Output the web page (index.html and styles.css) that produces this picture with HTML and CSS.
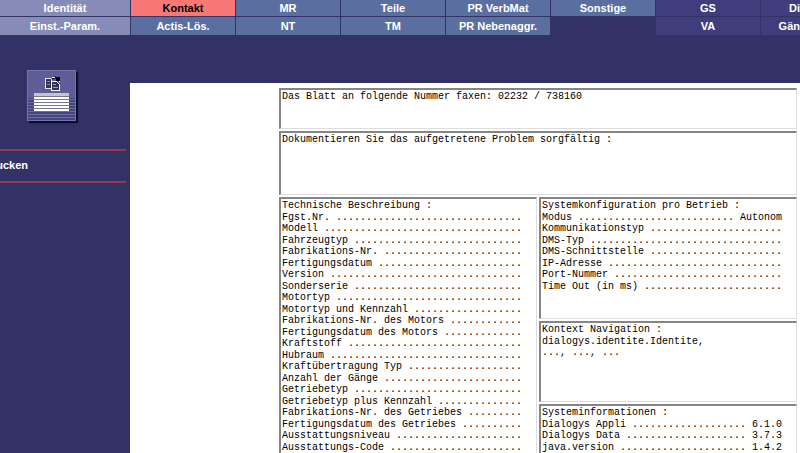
FILE: index.html
```html
<!DOCTYPE html>
<html lang="de">
<head>
<meta charset="utf-8">
<title>Dialogys – Kontakt</title>
<link rel="stylesheet" href="styles.css">
</head>
<body>
<nav class="tabs">
  <button class="tab light">Identität</button>
  <button class="tab active">Kontakt</button>
  <button class="tab">MR</button>
  <button class="tab">Teile</button>
  <button class="tab">PR VerbMat</button>
  <button class="tab">Sonstige</button>
  <button class="tab dark">GS</button>
  <button class="tab dark cut">Di</button>
  <button class="tab light">Einst.-Param.</button>
  <button class="tab">Actis-Lös.</button>
  <button class="tab">NT</button>
  <button class="tab">TM</button>
  <button class="tab">PR Nebenaggr.</button>
  <span></span>
  <button class="tab dark">VA</button>
  <button class="tab dark cut">Gän</button>
</nav>
<div class="layout">
  <aside class="side">
    <button class="tool" aria-label="Drucken">
      <svg width="49" height="51" viewBox="0 0 49 51" shape-rendering="crispEdges">
        <rect width="49" height="51" fill="#5d5d98"/>
        <rect y="28" width="49" height="23" fill="#44447f"/>
        <path d="M0 29.5H49M0 32.5H49M0 35.5H49M0 38.5H49M0 41.5H49M0 44.5H49M0 47.5H49" stroke="#6c6ca6"/>
        <path d="M.5 51V.5H49" fill="none" stroke="#7474ac"/>
        <path d="M48.5 1V50.5H0" fill="none" stroke="#7373aa"/>
        <rect x="7" y="23" width="35" height="17" fill="#77778f"/>
        <rect x="7" y="23" width="35" height="3" fill="#c4c4cc"/>
        <path d="M7 28H42M7 31H42M7 34H42M7 37H42M7 39.5H42" stroke="#fff" stroke-width="2"/>
        <path d="M18.5 8.5H24.5V18.5H18.5Z" fill="#33334d" stroke="#e4e4ec"/>
        <path d="M20 11.5H23M20 14.5H23" stroke="#8888a0"/>
        <path d="M24.5 11.5H29.5L32.5 14.5V20.5H24.5Z" fill="#33334d" stroke="#f4f4fa"/>
        <path d="M26 14.5H29M26 17.5H31" stroke="#a0a0b4"/>
        <path d="M25 9Q28 6 31 9M29 10H32V7" fill="none" stroke="#000" stroke-width="2" shape-rendering="auto"/>
        <path d="M25 7.5H28M32 11.5H33" stroke="#fff"/>
      </svg>
    </button>
    <div class="action"><a href="#">Drucken</a></div>
  </aside>
  <main class="sheet">
    <div class="panels">
      <section class="panel fax"><p>Das Blatt an folgende Nummer faxen: 02232 / 738160</p></section>
      <section class="panel problem"><p>Dokumentieren Sie das aufgetretene Problem sorgfältig :</p></section>
      <section class="panel technical">
        <ul>
          <li>Technische Beschreibung :</li>
          <li>Fgst.Nr. ...............................</li>
          <li>Modell .................................</li>
          <li>Fahrzeugtyp ............................</li>
          <li>Fabrikations-Nr. .......................</li>
          <li>Fertigungsdatum ........................</li>
          <li>Version ................................</li>
          <li>Sonderserie ............................</li>
          <li>Motortyp ...............................</li>
          <li>Motortyp und Kennzahl ..................</li>
          <li>Fabrikations-Nr. des Motors ............</li>
          <li>Fertigungsdatum des Motors .............</li>
          <li>Kraftstoff .............................</li>
          <li>Hubraum ................................</li>
          <li>Kraftübertragung Typ ...................</li>
          <li>Anzahl der Gänge .......................</li>
          <li>Getriebetyp ............................</li>
          <li>Getriebetyp plus Kennzahl ..............</li>
          <li>Fabrikations-Nr. des Getriebes .........</li>
          <li>Fertigungsdatum des Getriebes ..........</li>
          <li>Ausstattungsniveau .....................</li>
          <li>Ausstattungs-Code ......................</li>
        </ul>
      </section>
      <div class="stack">
        <section class="panel config">
          <ul>
            <li>Systemkonfiguration pro Betrieb :</li>
            <li>Modus .......................... Autonom</li>
            <li>Kommunikationstyp ......................</li>
            <li>DMS-Typ ................................</li>
            <li>DMS-Schnittstelle ......................</li>
            <li>IP-Adresse .............................</li>
            <li>Port-Nummer ............................</li>
            <li>Time Out (in ms) .......................</li>
          </ul>
        </section>
        <section class="panel context">
          <ul>
            <li>Kontext Navigation :</li>
            <li>dialogys.identite.Identite,</li>
            <li>..., ..., ...</li>
          </ul>
        </section>
        <section class="panel system">
          <ul>
            <li>Systeminformationen :</li>
            <li>Dialogys Appli ................... 6.1.0</li>
            <li>Dialogys Data .................... 3.7.3</li>
            <li>java.version ..................... 1.4.2</li>
          </ul>
        </section>
      </div>
    </div>
  </main>
</div>
</body>
</html>
```
FILE: styles.css
```css
* { box-sizing: border-box; }

html, body { height: 100%; }

body {
  margin: 0;
  overflow: hidden;
  display: flex;
  flex-direction: column;
  background: #333266;
  font-family: "Liberation Sans", Arial, sans-serif;
}

button { border: 0; padding: 0; font: inherit; }
ul, p { margin: 0; padding: 0; list-style: none; }

.tabs {
  display: grid;
  grid-template-columns: 130px repeat(6, 104px) minmax(0, 1fr);
  grid-template-rows: 16px 18px;
  gap: 1px;
  flex: none;
}

.tab {
  background: #5a6f9f;
  color: #fff;
  font-size: 11px;
  font-weight: bold;
  line-height: 16px;
  white-space: nowrap;
}

.light { background: #868bb7; }
.active { background: #f87878; color: #000; }
.dark { background: #403d7c; }
.cut { text-align: right; }

.layout {
  flex: 1;
  min-height: 0;
  display: grid;
  grid-template-columns: 130px minmax(0, 1fr);
}

.side { padding-top: 35px; overflow: hidden; }

.tool {
  display: block;
  margin-left: 27px;
  background: none;
  box-shadow: 2px 2px 1px #0c0c30;
}

.tool svg { display: block; }

.action {
  display: flex;
  margin: 28px 4px 0 0;
  padding: 6px 98px 8px 0;
  justify-content: flex-end;
  border-top: 2px solid #963859;
  border-bottom: 2px solid #963859;
}

.action a {
  color: #fff;
  font-size: 11px;
  font-weight: bold;
  line-height: 16px;
  text-decoration: none;
}

.sheet {
  margin-top: 48px;
  padding: 5px 3px 0 149px;
  background: #fff;
  overflow: hidden;
}

.panels {
  display: grid;
  grid-template-columns: 258px minmax(0, 1fr);
  gap: 2px;
}

.panel {
  padding: 1px 0 0 1px;
  border: 2px solid #858585;
  border-right: 1px solid #ddd;
  border-bottom: 1px solid #ddd;
  color: #000;
  font-family: "Liberation Mono", monospace;
  font-size: 10px;
  line-height: 12px;
  white-space: nowrap;
}

.panel li:nth-child(even) { line-height: 11px; }

.fax, .problem { grid-column: 1 / -1; }
.fax { min-height: 41px; }
.problem { min-height: 64px; }
.technical { min-height: 270px; }

.stack { display: flex; flex-direction: column; gap: 2px; }
.config { min-height: 122px; }
.context { min-height: 81px; }
.system { flex: 1; }
```
